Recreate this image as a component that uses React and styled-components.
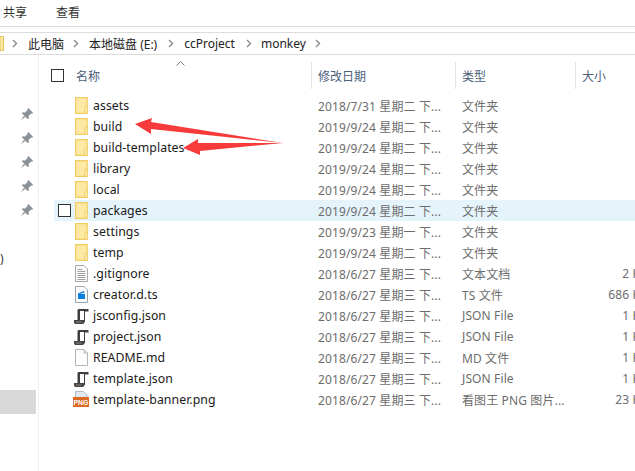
import React from "react";
import styled, { createGlobalStyle } from "styled-components";

const GlobalStyle = createGlobalStyle`
  html, body {
    margin: 0;
    padding: 0;
    height: 100%;
    background: #fff;
    overflow: hidden;
  }
  body {
    font-family: "Noto Sans", "Noto Sans CJK SC", sans-serif;
    font-size: 12px;
    color: #1a1a1a;
  }
`;

const Window = styled.div`
  position: relative;
  width: 635px;
  height: 471px;
  overflow: hidden;
  display: flex;
  flex-direction: column;
`;

const Ribbon = styled.div`
  display: flex;
  align-items: center;
  gap: 29px;
  padding: 0 0 2px 3px;
  box-sizing: border-box;
  height: 27px;
  border-bottom: 1px solid #dcdcdc;
  font-size: 12px;
  color: #333;
`;

const AddressBar = styled.div`
  height: 21px;
  margin-top: 5px;
  display: flex;
  align-items: center;
  border-top: 1px solid #dcdcdc;
  border-bottom: 1px solid #dcdcdc;
  color: #222;
`;

const Crumb = styled.span`
  margin-left: ${(p) => p.$gap}px;
  white-space: nowrap;
`;

const Main = styled.div`
  flex: 1;
  display: flex;
  min-height: 0;
`;

const Sidebar = styled.div`
  width: 38px;
  flex: none;
  border-right: 1px solid #f0f0f0;
  display: flex;
  flex-direction: column;
  padding-top: 47px;
  box-sizing: content-box;
`;

const PinSlot = styled.div`
  height: 24px;
  display: flex;
  align-items: center;
  justify-content: flex-end;
  padding-right: 4px;
`;

const SideText = styled.div`
  height: 24px;
  margin-top: 25px;
  line-height: 24px;
  color: #333;
`;

const SideSelected = styled.div`
  height: 24px;
  width: 36px;
  margin-top: 119px;
  background: #d9d9d9;
`;

const List = styled.div`
  flex: 1;
  min-width: 0;
  padding-left: 12px;
`;

const Header = styled.div`
  position: relative;
  height: 27px;
  margin-top: 7px;
  margin-bottom: 6px;
  display: grid;
  grid-template-columns: 25px 235px 144px 120px 80px;
  align-items: center;
  color: #4c607a;
`;

const HeaderCell = styled.div`
  height: 100%;
  display: flex;
  align-items: center;
  padding-left: ${(p) => p.$pad || 0}px;
  border-left: ${(p) => (p.$divider ? "1px solid #e5e5e5" : "none")};
  white-space: nowrap;
`;

const SortMark = styled.svg`
  position: absolute;
  left: 125px;
  top: -1px;
`;

const Check = styled.span`
  display: block;
  width: 11px;
  height: 11px;
  border: 1px solid #333;
  background: #fff;
`;

const Row = styled.div`
  height: 21px;
  margin-left: 3px;
  display: grid;
  grid-template-columns: 21px 18px 225px 144px 120px 66px;
  align-items: center;
  background: ${(p) => (p.$hover ? "#e5f3fb" : "transparent")};
  white-space: nowrap;
`;

const CheckCell = styled.div`
  padding-left: 4px;
`;

const IconCell = styled.div`
  display: flex;
  align-items: center;
  height: 21px;
  margin-left: ${(p) => (p.$wide ? -2 : 0)}px;
`;

const Name = styled.div`
  color: #1a1a1a;
  font-size: 12.3px;
  letter-spacing: 0.05px;
`;

const Meta = styled.div`
  color: #6d6d6d;
  letter-spacing: 0.12px;
`;

const Size = styled(Meta)`
  text-align: right;
`;

const ArrowLayer = styled.svg`
  position: absolute;
  left: 0;
  top: 0;
  pointer-events: none;
`;

const Chevron = () => (
  <svg width="6" height="9" viewBox="0 0 6 9" style={{ flex: "none" }}>
    <path d="M1 1l3.5 3.5L1 8" fill="none" stroke="#8a8a8a" strokeWidth="1.4" />
  </svg>
);

const Pin = () => (
  <svg width="14" height="14" viewBox="0 0 12 12">
    <path d="M7 .8l4.2 4.2-1 .9-.7-.3L7.4 7.7l.2 1.9-.9.9L1.6 5.4l.9-.9 1.9.2 2.1-2.1-.3-.7z" fill="#8a9299" />
    <path d="M3.4 7.4L.8 11.2l3.8-2.6z" fill="#8a9299" />
  </svg>
);

const FolderIcon = () => (
  <svg width="13" height="17" viewBox="0 0 13 17">
    <path d="M.6.6h11.6v15.8H.6z" fill="#fee9a4" stroke="#f0cd62" strokeWidth="1.2" />
    <path d="M10 16.4V9.8l2.2-1v7.6z" fill="#fff5cf" stroke="#f0cd62" />
  </svg>
);

const TextIcon = () => (
  <svg width="13" height="17" viewBox="0 0 13 17">
    <path d="M.5.5h8.5l3.5 3.5v12.5H.5z" fill="#fbfbfb" stroke="#a8a8a8" />
    <path d="M2.5 4.5h5M2.5 6.5h8M2.5 8.5h8M2.5 10.5h8M2.5 12.5h8M2.5 14.5h8" stroke="#a0a0a0" />
  </svg>
);

const TsIcon = () => (
  <svg width="13" height="17" viewBox="0 0 13 17">
    <path d="M.5.5h8.5l3.5 3.5v12.5H.5z" fill="#fbfbfb" stroke="#9aa4ad" />
    <path d="M3 8h7v5H3z" fill="#0f7fdc" />
    <path d="M3 7.4l6-2.4.8 1.6-6.4 1.8z" fill="#0f7fdc" />
  </svg>
);

const JsonIcon = () => (
  <svg width="16" height="16" viewBox="0 0 16 16">
    <path d="M6 1h9.500v2.500H12V14H10V3.500H7V12H4.500V2.500C4.500 1.500 5 1 6 1z" fill="#3f3f3f" />
    <path d="M7 3h4v9H7z" fill="#fff" />
    <path d="M1 12h10.500v1.500c0 1.500-.8 2.500-2 2.500H2.500C1.300 16 .8 14.500 1 12z" fill="#444" />
    <path d="M3 13.500h5.500v1H3z" fill="#8a8a8a" />
  </svg>
);

const BlankIcon = () => (
  <svg width="13" height="17" viewBox="0 0 13 17">
    <path d="M.5.5h8.500l3.500 3.500v12.500H.5z" fill="#fdfdfd" stroke="#b5b5b5" />
    <path d="M9 .5V4h3.500" fill="none" stroke="#b5b5b5" />
  </svg>
);

const PngIcon = () => (
  <svg width="16" height="17" viewBox="0 0 16 17">
    <path d="M2.500.5h8l3.500 3.500v4h-11.500z" fill="#dfeaf3" stroke="#a9bccb" />
    <rect x="0" y="6" width="16" height="10" fill="#dd6a24" />
    <text x="8" y="14.200" textAnchor="middle" fontFamily="Liberation Sans, sans-serif" fontSize="8" fontWeight="700" fill="#fff" textLength="15" lengthAdjust="spacingAndGlyphs">PNG</text>
  </svg>
);

const files = [
  { name: "assets", date: "2018/7/31 星期二 下...", type: "文件夹", icon: FolderIcon },
  { name: "build", date: "2019/9/24 星期二 下...", type: "文件夹", icon: FolderIcon },
  { name: "build-templates", date: "2019/9/24 星期二 下...", type: "文件夹", icon: FolderIcon },
  { name: "library", date: "2019/9/24 星期二 下...", type: "文件夹", icon: FolderIcon },
  { name: "local", date: "2019/9/24 星期二 下...", type: "文件夹", icon: FolderIcon },
  { name: "packages", date: "2019/9/24 星期二 下...", type: "文件夹", icon: FolderIcon, hover: true },
  { name: "settings", date: "2019/9/23 星期一 下...", type: "文件夹", icon: FolderIcon },
  { name: "temp", date: "2019/9/24 星期二 下...", type: "文件夹", icon: FolderIcon },
  { name: ".gitignore", date: "2018/6/27 星期三 下...", type: "文本文档", size: "2 KB", icon: TextIcon },
  { name: "creator.d.ts", date: "2018/6/27 星期三 下...", type: "TS 文件", size: "686 KB", icon: TsIcon },
  { name: "jsconfig.json", date: "2018/6/27 星期三 下...", type: "JSON File", size: "1 KB", icon: JsonIcon, wide: true },
  { name: "project.json", date: "2018/6/27 星期三 下...", type: "JSON File", size: "1 KB", icon: JsonIcon, wide: true },
  { name: "README.md", date: "2018/6/27 星期三 下...", type: "MD 文件", size: "1 KB", icon: BlankIcon },
  { name: "template.json", date: "2018/6/27 星期三 下...", type: "JSON File", size: "1 KB", icon: JsonIcon, wide: true },
  { name: "template-banner.png", date: "2018/6/27 星期三 下...", type: "看图王 PNG 图片...", size: "23 KB", icon: PngIcon, wide: true },
];

const App = () => (
  <Window>
    <GlobalStyle />
    <Ribbon>
      <span>共享</span>
      <span>查看</span>
    </Ribbon>
    <AddressBar>
      <svg width="4" height="15" viewBox="0 0 4 15" style={{ flex: "none" }}>
        <path d="M0 .5h3.5v14H0z" fill="#ffe9a6" stroke="#e6c25a" />
      </svg>
      <Crumb $gap={8}><Chevron /></Crumb>
      <Crumb $gap={10}>此电脑</Crumb>
      <Crumb $gap={9}><Chevron /></Crumb>
      <Crumb $gap={10}>本地磁盘 (E:)</Crumb>
      <Crumb $gap={11}><Chevron /></Crumb>
      <Crumb $gap={10}>ccProject</Crumb>
      <Crumb $gap={11}><Chevron /></Crumb>
      <Crumb $gap={9}>monkey</Crumb>
      <Crumb $gap={9}><Chevron /></Crumb>
    </AddressBar>
    <Main>
      <Sidebar>
        {[0, 1, 2, 3, 4].map((i) => (
          <PinSlot key={i}><Pin /></PinSlot>
        ))}
        <SideText>)</SideText>
        <SideSelected />
      </Sidebar>
      <List>
        <Header>
          <HeaderCell><Check /></HeaderCell>
          <HeaderCell>名称</HeaderCell>
          <HeaderCell $divider $pad={6}>修改日期</HeaderCell>
          <HeaderCell $divider $pad={6}>类型</HeaderCell>
          <HeaderCell $divider $pad={6}>大小</HeaderCell>
          <SortMark width="9" height="5" viewBox="0 0 9 5">
            <path d="M.5 4.500l4-4 4 4" fill="none" stroke="#777" />
          </SortMark>
        </Header>
        {files.map((f) => (
          <Row key={f.name} $hover={f.hover}>
            <CheckCell>{f.hover && <Check />}</CheckCell>
            <IconCell $wide={f.wide}><f.icon /></IconCell>
            <Name>{f.name}</Name>
            <Meta>{f.date}</Meta>
            <Meta>{f.type}</Meta>
            <Size>{f.size}</Size>
          </Row>
        ))}
      </List>
    </Main>
    <ArrowLayer width="635" height="471" viewBox="0 0 635 471">
      <path d="M135 124L152 118L151 122L283 143L151 129L151 134Z" fill="#f73b3b" />
      <path d="M183 148L198 139L198 143L283 143L200 151L200 155Z" fill="#f73b3b" />
    </ArrowLayer>
  </Window>
);

export default App;
